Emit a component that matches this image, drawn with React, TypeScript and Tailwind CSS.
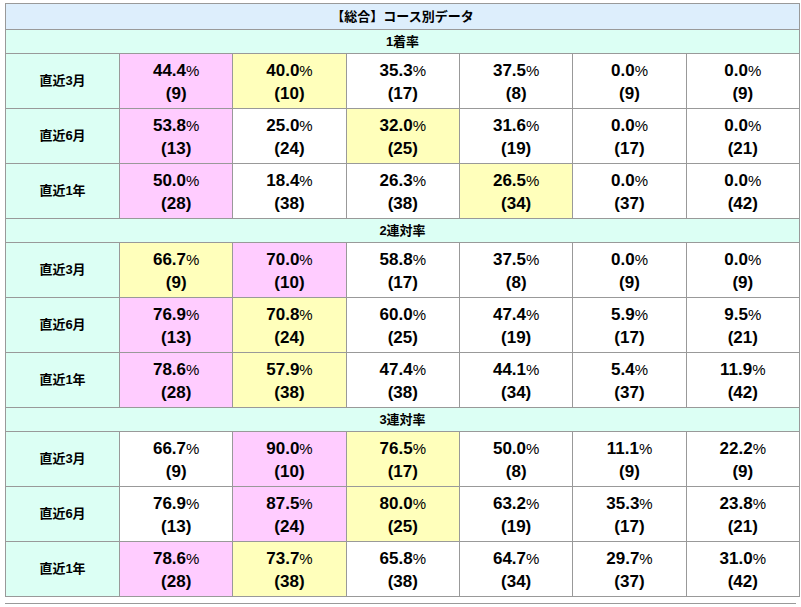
type Cell = { rate: string; count: number; hl?: 'pink' | 'yellow' }
type Section = { title: string; rows: { label: string; cells: Cell[] }[] }

const sections: Section[] = [
  {
    title: '1着率',
    rows: [
      { label: '直近3月', cells: [
        { rate: '44.4', count: 9, hl: 'pink' }, { rate: '40.0', count: 10, hl: 'yellow' }, { rate: '35.3', count: 17 },
        { rate: '37.5', count: 8 }, { rate: '0.0', count: 9 }, { rate: '0.0', count: 9 },
      ] },
      { label: '直近6月', cells: [
        { rate: '53.8', count: 13, hl: 'pink' }, { rate: '25.0', count: 24 }, { rate: '32.0', count: 25, hl: 'yellow' },
        { rate: '31.6', count: 19 }, { rate: '0.0', count: 17 }, { rate: '0.0', count: 21 },
      ] },
      { label: '直近1年', cells: [
        { rate: '50.0', count: 28, hl: 'pink' }, { rate: '18.4', count: 38 }, { rate: '26.3', count: 38 },
        { rate: '26.5', count: 34, hl: 'yellow' }, { rate: '0.0', count: 37 }, { rate: '0.0', count: 42 },
      ] },
    ],
  },
  {
    title: '2連対率',
    rows: [
      { label: '直近3月', cells: [
        { rate: '66.7', count: 9, hl: 'yellow' }, { rate: '70.0', count: 10, hl: 'pink' }, { rate: '58.8', count: 17 },
        { rate: '37.5', count: 8 }, { rate: '0.0', count: 9 }, { rate: '0.0', count: 9 },
      ] },
      { label: '直近6月', cells: [
        { rate: '76.9', count: 13, hl: 'pink' }, { rate: '70.8', count: 24, hl: 'yellow' }, { rate: '60.0', count: 25 },
        { rate: '47.4', count: 19 }, { rate: '5.9', count: 17 }, { rate: '9.5', count: 21 },
      ] },
      { label: '直近1年', cells: [
        { rate: '78.6', count: 28, hl: 'pink' }, { rate: '57.9', count: 38, hl: 'yellow' }, { rate: '47.4', count: 38 },
        { rate: '44.1', count: 34 }, { rate: '5.4', count: 37 }, { rate: '11.9', count: 42 },
      ] },
    ],
  },
  {
    title: '3連対率',
    rows: [
      { label: '直近3月', cells: [
        { rate: '66.7', count: 9 }, { rate: '90.0', count: 10, hl: 'pink' }, { rate: '76.5', count: 17, hl: 'yellow' },
        { rate: '50.0', count: 8 }, { rate: '11.1', count: 9 }, { rate: '22.2', count: 9 },
      ] },
      { label: '直近6月', cells: [
        { rate: '76.9', count: 13 }, { rate: '87.5', count: 24, hl: 'pink' }, { rate: '80.0', count: 25, hl: 'yellow' },
        { rate: '63.2', count: 19 }, { rate: '35.3', count: 17 }, { rate: '23.8', count: 21 },
      ] },
      { label: '直近1年', cells: [
        { rate: '78.6', count: 28, hl: 'pink' }, { rate: '73.7', count: 38, hl: 'yellow' }, { rate: '65.8', count: 38 },
        { rate: '64.7', count: 34 }, { rate: '29.7', count: 37 }, { rate: '31.0', count: 42 },
      ] },
    ],
  },
]

const bg = { pink: 'bg-[#ffccff]', yellow: 'bg-[#ffffbb]' }

export default function App() {
  return (
    <div
      className="min-h-screen bg-white pl-[5px] pr-[2px] pt-[3px] text-black"
      style={{ fontFamily: '"Liberation Sans", "Noto Sans CJK JP", sans-serif' }}
    >
      <table className="w-[795px] table-fixed border-collapse">
        <colgroup>
          <col className="w-[114px]" />
          <col /><col /><col /><col /><col /><col />
        </colgroup>
        <tbody>
          <tr>
            <th colSpan={7} className="h-[26px] border border-[#999] bg-[#ddeefc] text-center text-[13px] font-bold">
              【総合】コース別データ
            </th>
          </tr>
          {sections.map((section) => (
            <SectionRows key={section.title} section={section} />
          ))}
        </tbody>
      </table>
      <div className="mt-[6px] w-[791px] border-t border-[#999]" />
    </div>
  )
}

function SectionRows({ section }: { section: Section }) {
  return (
    <>
      <tr>
        <th colSpan={7} className="h-[24px] border border-[#999] bg-[#dcfff4] text-center text-[13px] font-bold">
          {section.title}
        </th>
      </tr>
      {section.rows.map((row) => (
        <tr key={row.label} className="h-[55px]">
          <th className="border border-[#999] bg-[#dcfff4] text-center text-[13px] font-bold">{row.label}</th>
          {row.cells.map((cell, i) => (
            <td
              key={i}
              className={`border border-[#999] pt-[1px] text-center text-[17px] font-bold leading-[23px] ${cell.hl ? bg[cell.hl] : 'bg-white'}`}
            >
              <div>
                {cell.rate}
                <span className="text-[15px] font-normal">%</span>
              </div>
              <div>({cell.count})</div>
            </td>
          ))}
        </tr>
      ))}
    </>
  )
}
